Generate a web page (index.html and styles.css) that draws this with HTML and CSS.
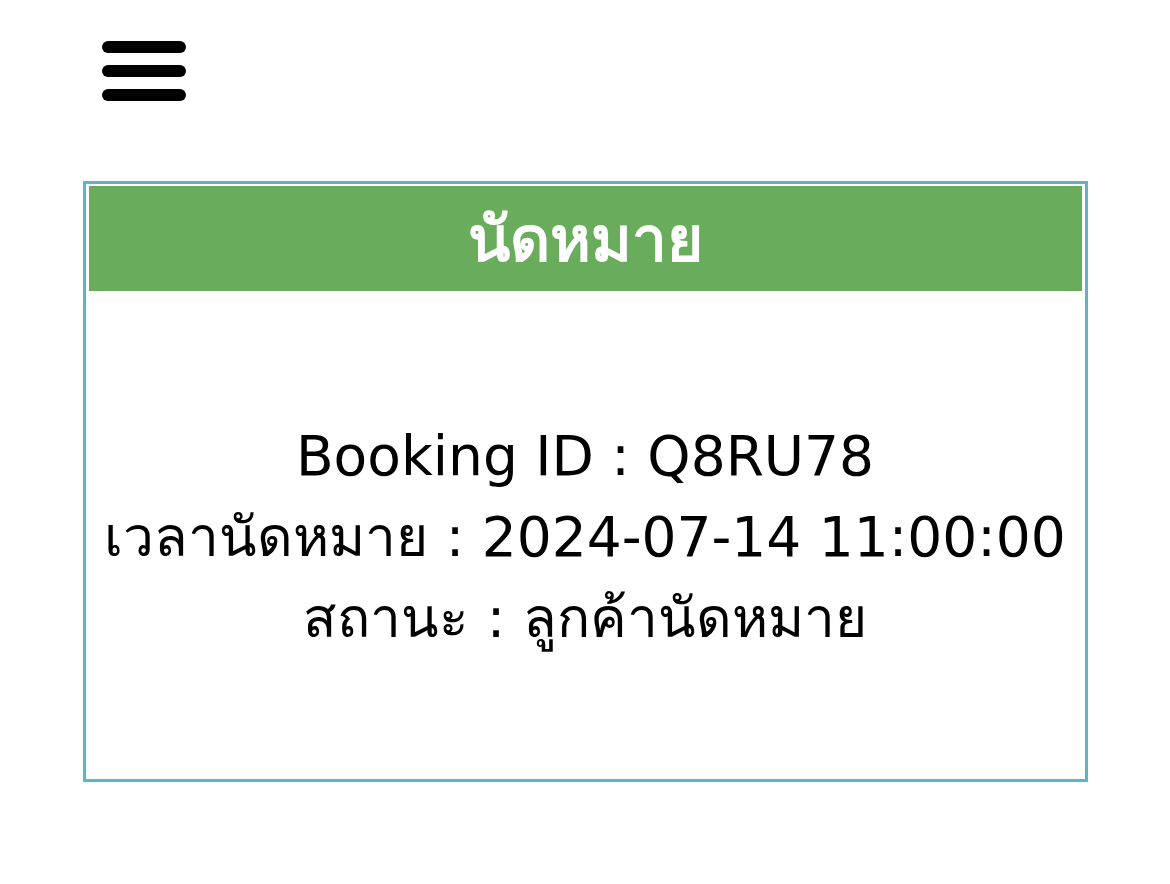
FILE: index.html
```html
<!DOCTYPE html>
<html lang="th">
<head>
    <meta charset="UTF-8">
    <meta name="viewport" content="width=device-width, initial-scale=1.0">
    <title>นัดหมาย</title>
    <link rel="stylesheet" href="styles.css">
</head>
<body>

    <div class="topbar">
        <button class="menu-btn" aria-label="menu">
            <span class="bar"></span>
            <span class="bar"></span>
            <span class="bar"></span>
        </button>
    </div>

    <div class="card">
        <div class="card-header">นัดหมาย</div>
        <div class="card-body">
            <p>Booking ID : Q8RU78</p>
            <p>เวลานัดหมาย : 2024-07-14 11:00:00</p>
            <p>สถานะ : ลูกค้านัดหมาย</p>
        </div>
    </div>

</body>
</html>
```

FILE: styles.css
```css
body {
    margin: 0;
    background: #ffffff;
    font-family: "DejaVu Sans", Verdana, sans-serif;
    color: #000000;
}
.topbar {
    padding: 41px 0 0 102px;
    height: 60px;
}
.menu-btn {
    display: flex;
    flex-direction: column;
    gap: 12px;
    padding: 0;
    border: none;
    background: transparent;
    cursor: pointer;
}
.bar {
    display: block;
    width: 84px;
    height: 12px;
    border-radius: 6px;
    background: #000000;
}
.card {
    width: 993px;
    margin: 80px auto 0;
    border: 3px solid #5db5c8;
    padding: 2px 3px 0 3px;
}
.card-header {
    background: #69ac5b;
    color: #ffffff;
    height: 105px;
    display: flex;
    align-items: center;
    justify-content: center;
    font-size: 62px;
    font-weight: bold;
}
.card-body {
    height: 484px;
    padding-top: 4px;
    display: flex;
    flex-direction: column;
    justify-content: center;
    text-align: center;
    font-size: 55px;
}
.card-body p {
    margin: 0;
    line-height: 81px;
}
```
